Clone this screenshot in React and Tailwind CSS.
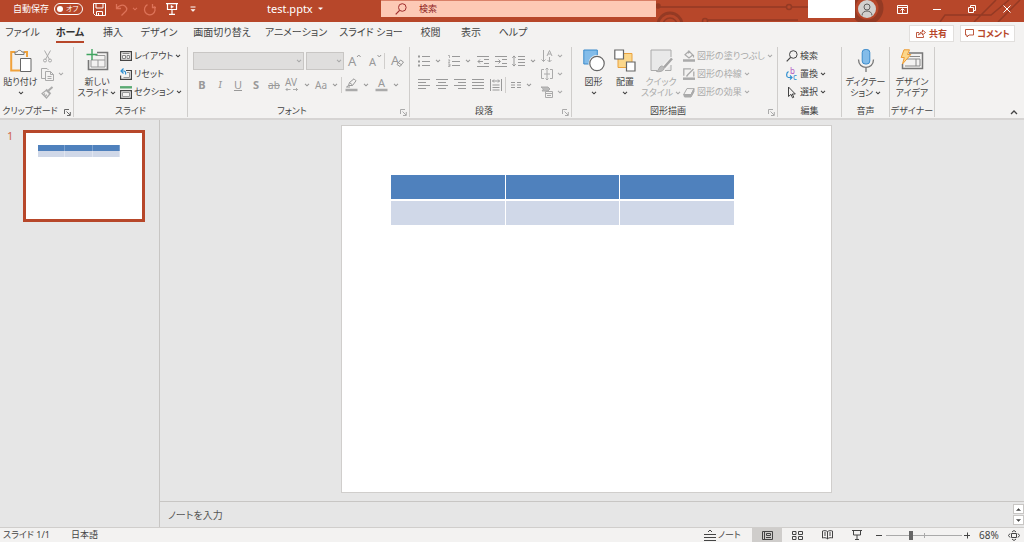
import React, { useState } from 'react'

const tabs = [
    { name: 'ファイル', width: 'w-[45px]' },
    { name: 'ホーム', width: 'w-[50px]' },
    { name: '挿入', width: 'w-[36px]' },
    { name: 'デザイン', width: 'w-[56px]' },
    { name: '画面切り替え', width: 'w-[70px]' },
    { name: 'アニメーション', width: 'w-[78px]' },
    { name: 'スライド ショー', width: 'w-[72px]' },
    { name: '校閲', width: 'w-[47px]' },
    { name: '表示', width: 'w-[34px]' },
    { name: 'ヘルプ', width: 'w-[50px]' },
]

// every drawing uses one viewBox unit per pixel
const Svg = ({ w, h, children, className = '' }) => (
    <svg width={w} height={h} viewBox={`0 0 ${w} ${h}`} fill="none" stroke="currentColor" className={`shrink-0 overflow-visible ${className}`} aria-hidden="true">
        {children}
    </svg>
)

const Caret = ({ className = '' }) => (
    <Svg w={6} h={4} className={className}><path d="M1 .8 3 2.8 5 .8" strokeWidth="1.100" /></Svg>
)

/* title bar */

const SaveIcon = () => (
    <Svg w={13} h={13}><path d="M.5.5h12v12H2.5l-2-2zM3 .5v4.500h7V.5M3.500 12.500v-4h6v4M5.500 10v2" /></Svg>
)

const UndoIcon = () => (
    <Svg w={13} h={13} className="text-[#dd7359]"><path d="M1.500 1v4.500H6M1.500 5.500C4 2 8 1.500 10 3c3 2.500 1.500 5 0 6l-3.500 3.500" strokeWidth="1.300" /></Svg>
)

const RedoIcon = () => (
    <Svg w={14} h={13} className="text-[#dd7359]"><path d="M9.500 1v3.500H13M4.500 1.700a5.300 5.300 0 1 0 6.500 1.600" strokeWidth="1.300" /></Svg>
)

const PresentIcon = () => (
    <Svg w={12} h={12}><path d="M0 .7h12M1.500 1v5.500h9V1M6 6.500v4.500M3 11.300h6" strokeWidth="1.200" /><path d="M5 2.300v3L7.500 3.800z" fill="currentColor" strokeWidth=".5" /></Svg>
)

const SearchIcon = () => (
    <Svg w={12} h={12}><circle cx="7.300" cy="4.500" r="3.800" /><path d="M4.600 7.300.7 11.300" strokeWidth="1.200" /></Svg>
)

/* ribbon */

const PasteIcon = () => (
    <Svg w={22} h={24}>
        <path d="M5 3H1.200v18.500H10M14 3h3v5" stroke="#f0a23c" strokeWidth="2" />
        <path d="M5 5.500V3h2.200C7.500.8 11.500.8 11.800 3H14v2.500z" fill="#f7f7f7" stroke="#777" />
        <path d="M10.500 9.500h10.500v13H10.500z" fill="#fff" stroke="#666" />
    </Svg>
)

const CutIcon = () => (
    <Svg w={9} h={13}><path d="m1.500.5 5 9M7.500.5l-5 9" /><circle cx="2" cy="10.500" r="1.500" /><circle cx="7" cy="10.500" r="1.500" /></Svg>
)

const CopyIcon = () => (
    <Svg w={13} h={13}><path d="M4 10.500H.5V.5h5.500l1.500 1.500M4.500 3.500h5l3 3v6h-8zM9.500 3.500v3h3M6.500 8.500h4M6.500 10.500h4" /></Svg>
)

const BrushIcon = () => (
    <Svg w={13} h={13}><path d="m11.500 1-4 3.500M5 3.500l4.500 4.500" strokeWidth="2" /><path d="M5 4.500 1 7.500 5.500 12l3.300-4M3 8.500l1-1M4.500 10l1.300-1.300" strokeWidth="1.200" /></Svg>
)

const NewSlideIcon = () => (
    <Svg w={23} h={24}>
        <path d="M11 3.500h10.500v17H2.500V11" stroke="#777" strokeWidth="1.600" />
        <path d="M9.500 6.500h9.500V18M5 11v7h14M5 11h14M12 11v7" stroke="#999" />
        <path d="M6 0v11M.5 5.500h11" stroke="#3fa45f" strokeWidth="1.400" />
    </Svg>
)

const LayoutIcon = () => (
    <Svg w={12} h={10}><path d="M.6.6h10.800v8.800H.6z" strokeWidth="1.200" /><path d="M2.500 2.500h7M2.500 4.500h3v3h-3zM7 4.500h2.500v3H7z" stroke="#888" /></Svg>
)

const ResetIcon = () => (
    <Svg w={12} h={12}>
        <path d="M6 2.500h5.400v8.900H.6V7.500" strokeWidth="1.200" /><path d="M7 4.500h2.500v5h-6" stroke="#999" />
        <path d="M3.500.5 1 3l2.500 2.500M1 3h2.500c2 0 2.500 1.500 2 3.500" stroke="#2f8fd0" strokeWidth="1.200" />
    </Svg>
)

const SectionIcon = () => (
    <Svg w={12} h={13}><path d="M0 1.300h12" stroke="#5aaa72" strokeWidth="2.400" /><path d="M.6 4.600h10.800v7.800H.6z" strokeWidth="1.200" /><path d="M2.500 6.500h7v4h-7z" stroke="#999" /></Svg>
)

const GrowIcon = () => (
    <Svg w={14} h={14}><text x="0" y="12" fontSize="13" fill="currentColor" stroke="none">A</text><path d="m9 3 1.800-2 1.800 2" /></Svg>
)

const ShrinkIcon = () => (
    <Svg w={13} h={14}><text x="0" y="12" fontSize="11" fill="currentColor" stroke="none">A</text><path d="m8.500 1 1.800 2 1.800-2" /></Svg>
)

const ClearIcon = () => (
    <Svg w={13} h={14}><text x="0" y="11" fontSize="13" fill="currentColor" stroke="none">A</text><path d="m6 10.500 3.500-4.500 3 2-3.500 4.500zM7.500 8.800l3 2" fill="#f3f2f1" /></Svg>
)

const SpacingIcon = () => (
    <Svg w={14} h={14}><text x="0" y="8" fontSize="10" fill="currentColor" stroke="none">AV</text><path d="M1 11.500h4.500M2.500 10 1 11.500 2.500 13M8 11.500h4.500M11 10l1.500 1.500L11 13" strokeWidth=".8" /></Svg>
)

const HighlightIcon = () => (
    <Svg w={13} h={14}><path d="M.5 12h12" stroke="#aaa" strokeWidth="2.500" /><path d="m3.500 7.500 1-3L9 .8l2 2-3.500 4.700zM4.500 4.500l3 2.500M3.500 7.500 1.500 9H5" /></Svg>
)

const FontColorIcon = () => (
    <Svg w={13} h={14}><text x="3" y="9" fontSize="11" fill="currentColor" stroke="none">A</text><path d="M.5 12h12" stroke="#aaa" strokeWidth="2.500" /></Svg>
)

const BulletIcon = () => (
    <Svg w={12} h={12}><path d="M0 1.500h2M0 6.500h2M0 10.500h2" strokeWidth="2" /><path d="M4 1.500h8M4 6.500h8M4 10.500h8" /></Svg>
)

const NumberIcon = () => (
    <Svg w={12} h={12}><path d="M0 .5h1.500V3M0 5h2L.5 7.500H2M0 9h2v2.500H0M.5 10.300H2" strokeWidth=".7" /><path d="M4 1.500h8M4 6.500h8M4 10.500h8" /></Svg>
)

const IndentIcon = ({ out }) => (
    <Svg w={12} h={11}><path d="M0 .5h12M7 3.500h5M7 7.500h5M0 10.500h12" /><path d={out ? 'M6 5.500H1M3 3.500l-2 2 2 2' : 'M0 5.500h5M3.500 3.500l2 2-2 2'} /></Svg>
)

const LineSpacingIcon = () => (
    <Svg w={13} h={12}><path d="M2 .8v10.400M.3 2.800 2 1l1.700 1.800M.3 9.200 2 11l1.700-1.800M6 1.500h7M6 4.500h7M6 7.500h7M6 10.500h7" /></Svg>
)

const alignPaths = {
    left: 'M0 .5h12M0 3.500h8M0 6.500h12M0 9.500h8',
    center: 'M0 .5h12M2 3.500h8M0 6.500h12M2 9.500h8',
    right: 'M0 .5h12M4 3.500h8M0 6.500h12M4 9.500h8',
    justify: 'M0 .5h12M0 3.500h12M0 6.500h12M0 9.500h12',
    distribute: 'M.5 0v12M11.500 0v12M2.500 2h7M4 .5 2.500 2 4 3.500M8 .5 9.500 2 8 3.500M2.500 6h7M2.500 8.500h7M2.500 11h7',
}

const AlignIcon = ({ type }) => (
    <Svg w={12} h={12}><path d={alignPaths[type]} /></Svg>
)

const ColumnsIcon = () => (
    <Svg w={10} h={6}><path d="M0 .5h4M6 .5h4M0 3h4M6 3h4M0 5.500h4M6 5.500h4" /></Svg>
)

const DirectionIcon = () => (
    <Svg w={12} h={13}><path d="M2.500 0v11.500M.5 9.500l2 2 2-2M8.500 7v5M6.500 10l2 2 2-2M6 6l2.500-5.500L11 6M7 4h3" /></Svg>
)

const AlignTextIcon = () => (
    <Svg w={12} h={12}><path d="M3 1.500H.5v9H3M9 1.500h2.500v9H9M6 0v12M4.500 1.500 6 0l1.500 1.500M4.500 10.500 6 12l1.500-1.500M3 6h6" /></Svg>
)

const SmartArtIcon = () => (
    <Svg w={12} h={12}><path d="M0 1h7l2 2-2 2H1l1.500-2z" fill="#bbb" /><path d="M4.500 5.500h7v6h-7zM4.500 7.500h7M6 9.500h4" /></Svg>
)

const ShapesIcon = () => (
    <Svg w={22} h={24}><path d="M.8 1h13.500v14H.8z" fill="#83bce9" stroke="#3b8bcb" /><circle cx="14" cy="14.500" r="8.500" fill="#f3f2f1" stroke="none" /><circle cx="14" cy="14.500" r="7.200" fill="#fff" stroke="#666" strokeWidth="1.200" /></Svg>
)

const ArrangeIcon = () => (
    <Svg w={22} h={24}><path d="M4 4.500h14v14H4z" fill="#fbd78b" stroke="#eaa23e" /><path d="M.8 1h8.700v9H.8zM12.500 13H21v9h-8.500z" fill="#fff" stroke="#666" strokeWidth="1.200" /></Svg>
)

const QuickStyleIcon = () => (
    <Svg w={23} h={24}><path d="M7 21.500H1V1h20v7M21 16v5.500h-6" fill="#e9e9e9" stroke="#aaa" /><path d="m22 9.500-8 9" stroke="#a5a5a5" strokeWidth="2.500" /><path d="M6.500 22.500c2.500-.5 2-5 5-5.500 2 0 3 1.500 2.500 3-1 2.500-4.500 3-7.500 2.500z" fill="#bbb" stroke="#aaa" /></Svg>
)

const FillIcon = () => (
    <Svg w={12} h={12}><path d="M0 10.500h12" stroke="#aaa" strokeWidth="2.500" /><path d="M2 4.800 6 1l3.800 4-3.800 3zM5.500 3.500v-3M10.500 5v2.500" strokeWidth="1.200" /></Svg>
)

const OutlineIcon = () => (
    <Svg w={12} h={12}><path d="M0 10.700h12" stroke="#aaa" strokeWidth="2.500" /><path d="M8 .8H.8v7M10.800 3.500v5M10.500 1 5 6.500 3.500 8.500" strokeWidth="1.300" /></Svg>
)

const EffectIcon = () => (
    <Svg w={12} h={11}><path d="m.7 7.500 3.300-6 7 .2-3 5.800z" fill="#f3f2f1" /><path d="M.7 7.500 8 7.700l3-6v3L8 10H1.500z" fill="#aaa" /></Svg>
)

const ReplaceIcon = () => (
    <Svg w={12} h={13}>
        <text x="4" y="6" fontSize="8" fill="#b259c2" stroke="none">b</text>
        <text x="7" y="12" fontSize="8" fill="#2f8fd0" stroke="none">c</text>
        <path d="M2.500 3.500C0 5 0 9 2.500 9.500h3.500M4 7.500l2 2-2 2" stroke="#2f8fd0" strokeWidth="1.200" />
    </Svg>
)

const CursorIcon = () => (
    <Svg w={12} h={13}><path d="M2.500 1v9.500L5 8.300l1.500 3.500 1.300-.6L6.300 8h3z" /></Svg>
)

const MicIcon = () => (
    <Svg w={18} h={24}><rect x="5.200" y=".5" width="7.600" height="14.500" rx="3" fill="#83bce9" stroke="#3b8bcb" /><path d="M1.500 10.500c0 10.500 15 10.500 15 0M9 18.500V23" stroke="#777" strokeWidth="1.300" /></Svg>
)

const IdeasIcon = () => (
    <Svg w={24} h={24}>
        <path d="M9 4h13.500v15.500H2.500V15" stroke="#777" strokeWidth="1.500" /><path d="M9.500 7.500H20M5 10h15v7H5M16 10v7" stroke="#888" />
        <path d="M4 .8h5.500L7.500 5.500h3.300L2.500 15l1.800-6.500H1.200z" fill="#fcd68a" stroke="#ed9b33" />
    </Svg>
)

const Group = ({ label, width, launcher, dim, children }) => (
    <section aria-label={label} className={`${width} flex shrink-0 flex-col border-r border-[#cfcdcb]`}>
        <div className="flex h-[57px]">{children}</div>
        <div className={`relative flex h-[13px] items-center justify-center whitespace-nowrap text-[#444] ${launcher ? 'pr-[13px]' : ''}`}>
            {label}
            {launcher && (
                <button aria-label={`${label}の設定`} className={`absolute right-[2px] bottom-[1px] ${dim ? 'text-[#aaa]' : 'text-[#666]'}`}>
                    <Svg w={7} h={7}><path d="M.5 5V.5H5M2.500 2.500l3.500 3.500M6.300 3v3.500H3" /></Svg>
                </button>
            )}
        </div>
    </section>
)

const BigButton = ({ icon, top, bottom, caret, width, dim }) => (
    <button className={`${width} flex shrink-0 flex-col items-center whitespace-nowrap pt-[2px] leading-[11px] ${dim ? 'text-[#aaa]' : 'text-[#444]'}`}>
        {icon}
        <span className="mt-[3px]">{top}</span>
        <span className="flex h-[11px] items-center gap-[2px]">{bottom}{caret && <Caret />}</span>
    </button>
)

const SmallButton = ({ icon, label, caret, name, dim }) => (
    <button aria-label={name} className={`flex h-[18px] items-center gap-[2px] whitespace-nowrap ${dim ? 'text-[#aaa]' : 'text-[#444]'}`}>
        {icon}
        {label}
        {caret && <Caret className={label ? '' : 'ml-[2px]'} />}
    </button>
)

const Tool = ({ name, width = 'w-[18px]', caret, children }) => (
    <button aria-label={name} className={`${width} flex h-[24px] items-center justify-center gap-[5px]`}>
        {children}
        {caret && <Caret />}
    </button>
)

const Divider = () => <div className="my-[4px] w-px bg-[#d0cecc]" />

const TitleBar = () => {
    const [autoSave, setAutoSave] = useState(false)

    return (
        <header className="flex h-[22px] shrink-0 items-start bg-[#b7472a] text-white">
            <div className="flex h-[18px] w-[267px] shrink-0 items-center pl-[13px]">
                <label className="flex w-[80px] items-center gap-[5px] whitespace-nowrap">
                    自動保存
                    <input type="checkbox" className="sr-only" checked={autoSave} onChange={() => setAutoSave(!autoSave)} />
                    <span className="flex h-[12px] w-[29px] shrink-0 items-center gap-[3px] rounded-full border border-white pl-[2px] text-[7px] leading-[10px]">
                        <span className="size-[6px] rounded-full bg-white" />オフ
                    </span>
                </label>
                <button aria-label="上書き保存" className="w-[22px]"><SaveIcon /></button>
                <button aria-label="元に戻す" className="flex w-[28px] items-center gap-[4px]"><UndoIcon /><Caret className="text-[#dd7359]" /></button>
                <button aria-label="やり直し" className="w-[23px]"><RedoIcon /></button>
                <button aria-label="スライド ショーの開始" className="w-[24px]"><PresentIcon /></button>
                <button aria-label="クイック アクセスの設定">
                    <Svg w={6} h={7}><path d="M.5 1h5" /><path d="M1 3.500h4L3 5.500z" fill="currentColor" strokeWidth=".5" /></Svg>
                </button>
            </div>
            <button className="flex h-[17px] w-[114px] shrink-0 items-center gap-[5px] text-[11px]">
                test.pptx
                <Svg w={5} h={4}><path d="M.5.8h4l-2 2z" fill="currentColor" strokeWidth=".5" /></Svg>
            </button>
            <label className="flex h-[17px] min-w-0 flex-1 items-center gap-[12px] border-t border-[#d98068] bg-[#fdc9b5] pl-[14px] text-[#a02d2d]">
                <SearchIcon />
                <input aria-label="検索" placeholder="検索" className="min-w-0 flex-1 outline-none placeholder:text-[#8e2424]" />
            </label>
            <div className="relative flex h-[22px] w-[368px] shrink-0 items-start overflow-hidden">
                <svg width="368" height="22" viewBox="0 0 368 22" fill="none" stroke="#943a24" strokeWidth="1.500" className="absolute inset-0" aria-hidden="true">
                    <path d="M2 7h128M136 7h30M52 20h90M284 22l5-7h46l18-15M318 22l22-22M342 22l22-22" />
                    <circle cx="2" cy="6" r="2" fill="#943a24" />
                    <circle cx="133" cy="7" r="2.500" />
                    <circle cx="14" cy="25" r="12" strokeWidth="3" /><circle cx="14" cy="25" r="7" />
                    <circle cx="49" cy="21" r="2.500" />
                    <circle cx="211" cy="8" r="14" strokeWidth="5" />
                </svg>
                <div className="relative ml-auto flex h-[18px] items-center">
                    <div className="h-full w-[47px] bg-white" />
                    <button aria-label="アカウント" className="ml-[3px] grid size-[18px] place-items-center rounded-full bg-[#d2d0ce] text-[#605e5c]">
                        <Svg w={12} h={13}><circle cx="6" cy="4" r="3" /><path d="M1 12.500c0-6 10-6 10 0" /></Svg>
                    </button>
                    <button aria-label="リボンの表示オプション" className="ml-[9px] grid w-[34px] place-items-center">
                        <Svg w={11} h={9}><path d="M.5.5h10v8H.5zM.5 2.500h10M5.500 8V4M3.500 5.500l2-2 2 2" /></Svg>
                    </button>
                    <button aria-label="最小化" className="grid w-[36px] place-items-center"><Svg w={8} h={8}><path d="M0 4.500h8" /></Svg></button>
                    <button aria-label="元に戻す (縮小)" className="grid w-[34px] place-items-center">
                        <Svg w={8} h={8}><path d="M.5 2.500h5v5h-5zM2.500 2V.5h5v5H6" /></Svg>
                    </button>
                    <button aria-label="閉じる" className="grid w-[35px] place-items-center"><Svg w={8} h={8}><path d="m.5.5 7 7M7.500.5l-7 7" /></Svg></button>
                </div>
            </div>
        </header>
    )
}

const TabBar = ({ active, setActive }) => (
    <nav className="flex h-[25px] items-start">
        {tabs.map((tab) => (
            <button key={tab.name} onClick={() => setActive(tab.name)} className={`${tab.width} flex h-[21px] shrink-0 justify-center whitespace-nowrap text-[10px] ${active === tab.name ? 'font-bold text-[#333]' : ''}`}>
                <span className={`flex h-full items-center border-b-2 ${active === tab.name ? 'border-[#b7472a]' : 'border-transparent'}`}>{tab.name}</span>
            </button>
        ))}
        <div className="ml-auto flex gap-[6px] pt-[3px] pr-[9px] font-bold text-[#b7472a]">
            <button className="flex h-[17px] w-[45px] items-center justify-center gap-[3px] border border-[#e1dfdd] bg-white">
                <Svg w={10} h={9}><path d="M3 3.500H.5v5h7v-2M2.500 6c.5-2 2-3 4-3V1l3 2.500-3 2.500V4.500c-2 0-3 .5-4 1.500z" strokeWidth=".9" /></Svg>
                共有
            </button>
            <button className="flex h-[17px] w-[55px] items-center justify-center gap-[3px] border border-[#e1dfdd] bg-white">
                <Svg w={9} h={9}><path d="M.5.5h8v5.500H4L2 8V6H.5z" strokeWidth=".9" /></Svg>
                コメント
            </button>
        </div>
    </nav>
)

const FontSelect = ({ name, width }) => (
    <div className={`relative ${width}`}>
        <select aria-label={name} disabled className="block h-[18px] w-full appearance-none border border-[#c8c6c4] bg-[#dfdedd]" />
        <Caret className="absolute right-[2px] top-[7px] text-[#aaa]" />
    </div>
)

const Ribbon = () => (
    <div className="flex h-[71px] pb-px">
        <Group label="クリップボード" width="w-[74px]" launcher>
            <BigButton icon={<PasteIcon />} top="貼り付け" caret width="w-[41px]" />
            <div className="flex flex-col">
                <SmallButton icon={<span className="w-[13px] pl-[2px]"><CutIcon /></span>} name="切り取り" dim />
                <SmallButton icon={<CopyIcon />} name="コピー" caret dim />
                <SmallButton icon={<BrushIcon />} name="書式のコピー" dim />
            </div>
        </Group>
        <Group label="スライド" width="w-[114px]">
            <BigButton icon={<NewSlideIcon />} top="新しい" bottom="スライド" caret width="w-[46px]" />
            <div className="flex flex-col">
                <SmallButton icon={<LayoutIcon />} label="レイアウト" caret />
                <SmallButton icon={<ResetIcon />} label="リセット" />
                <SmallButton icon={<SectionIcon />} label="セクション" caret />
            </div>
        </Group>
        <Group label="フォント" width="w-[222px]" launcher dim>
            <div className="flex flex-col pt-[2px] pl-[5px] text-[#999]">
                <div className="flex h-[24px] items-center">
                    <div className="flex gap-[2px]">
                        <FontSelect name="フォント名" width="w-[111px]" />
                        <FontSelect name="フォント サイズ" width="w-[38px]" />
                    </div>
                    <Tool name="拡大" width="w-[22px]"><GrowIcon /></Tool>
                    <Tool name="縮小"><ShrinkIcon /></Tool>
                    <div className="h-[16px] w-px bg-[#d0cecc]" />
                    <Tool name="書式のクリア" width="w-[24px]"><ClearIcon /></Tool>
                </div>
                <div className="flex text-[11px]">
                    <Tool name="太字"><b>B</b></Tool>
                    <Tool name="斜体"><i className="font-serif">I</i></Tool>
                    <Tool name="下線"><u>U</u></Tool>
                    <Tool name="影"><b>S</b></Tool>
                    <Tool name="取り消し線"><s className="text-[10px]">ab</s></Tool>
                    <Tool name="文字の間隔" width="w-[29px]" caret><SpacingIcon /></Tool>
                    <Tool name="大文字/小文字" width="w-[29px]" caret><span className="text-[10px]">Aa</span></Tool>
                    <Divider />
                    <Tool name="蛍光ペン" width="w-[30px]" caret><HighlightIcon /></Tool>
                    <Tool name="フォントの色" width="w-[29px]" caret><FontColorIcon /></Tool>
                </div>
            </div>
        </Group>
        <Group label="段落" width="w-[162px]" launcher dim>
            <div className="flex w-[128px] flex-col pt-[2px] pl-[5px] text-[#999]">
                <div className="flex">
                    <Tool name="箇条書き" width="w-[29px]" caret><BulletIcon /></Tool>
                    <Tool name="段落番号" width="w-[30px]" caret><NumberIcon /></Tool>
                    <Tool name="インデントを減らす"><IndentIcon out /></Tool>
                    <Tool name="インデントを増やす"><IndentIcon /></Tool>
                    <Tool name="行間" width="w-[28px]" caret><LineSpacingIcon /></Tool>
                </div>
                <div className="flex">
                    <Tool name="左揃え"><AlignIcon type="left" /></Tool>
                    <Tool name="中央揃え"><AlignIcon type="center" /></Tool>
                    <Tool name="右揃え"><AlignIcon type="right" /></Tool>
                    <Tool name="両端揃え"><AlignIcon type="justify" /></Tool>
                    <Tool name="均等割り付け"><AlignIcon type="distribute" /></Tool>
                    <Divider />
                    <Tool name="段組み" width="w-[30px]" caret><ColumnsIcon /></Tool>
                </div>
            </div>
            <div className="flex flex-col pl-[3px]">
                <SmallButton icon={<DirectionIcon />} name="文字列の方向" caret dim />
                <SmallButton icon={<AlignTextIcon />} name="文字の配置" caret dim />
                <SmallButton icon={<SmartArtIcon />} name="SmartArt に変換" caret dim />
            </div>
        </Group>
        <Group label="図形描画" width="w-[206px]" launcher dim>
            <div className="flex w-[111px] shrink-0 pl-[6px]">
                <BigButton icon={<ShapesIcon />} top="図形" caret width="w-[31px]" />
                <BigButton icon={<ArrangeIcon />} top="配置" caret width="w-[32px]" />
                <BigButton icon={<QuickStyleIcon />} top="クイック" bottom="スタイル" caret width="w-[40px]" dim />
            </div>
            <div className="flex flex-col">
                <SmallButton icon={<FillIcon />} label="図形の塗りつぶし" caret dim />
                <SmallButton icon={<OutlineIcon />} label="図形の枠線" caret dim />
                <SmallButton icon={<EffectIcon />} label="図形の効果" caret dim />
            </div>
        </Group>
        <Group label="編集" width="w-[64px]">
            <div className="flex flex-col pl-[8px]">
                <SmallButton icon={<SearchIcon />} label="検索" />
                <SmallButton icon={<ReplaceIcon />} label="置換" caret />
                <SmallButton icon={<CursorIcon />} label="選択" caret />
            </div>
        </Group>
        <Group label="音声" width="w-[48px]">
            <BigButton icon={<MicIcon />} top="ディクテー" bottom="ション" caret width="w-[47px]" />
        </Group>
        <Group label="デザイナー" width="w-[45px]">
            <BigButton icon={<IdeasIcon />} top="デザイン" bottom="アイデア" width="w-[44px]" />
        </Group>
        <button aria-label="リボンを折りたたむ" className="mt-auto mr-[6px] mb-[2px] ml-auto"><Svg w={8} h={6}><path d="M1 5 4 2l3 3" strokeWidth="1.300" /></Svg></button>
    </div>
)

const SlideTable = () => (
    <table className="w-[88%] table-fixed border-separate border-spacing-0">
        <tbody>
            <tr>{[0, 1, 2].map((c) => <td key={c} className="h-[25px] border-r border-b border-white bg-[#4f81bd] p-0" />)}</tr>
            <tr>{[0, 1, 2].map((c) => <td key={c} className="h-[25px] border-t border-r border-white bg-[#d0d8e8] p-0" />)}</tr>
        </tbody>
    </table>
)

const Workspace = () => (
    <main className="flex min-h-0 flex-1 border-t-2 border-[#d6d4d3]">
        <aside className="flex w-[160px] shrink-0 items-start border-r border-[#c8c6c4] pt-[10px] pl-[7px]">
            <span className="w-[16px] text-[11px] leading-[12px] text-[#d0654c]">1</span>
            <button aria-label="スライド 1" className="flex aspect-[4/3] w-[122px] items-start border-[3px] border-[#b7472a] bg-white pt-[12px] pl-[12px]">
                <span className="grid w-[82px] grid-cols-3">
                    {[0, 1, 2].map((c) => <span key={c} className="h-[6px] border-r border-[#7ba1cf] bg-[#4f81bd]" />)}
                    {[0, 1, 2].map((c) => <span key={c} className="h-[6px] border-r border-[#e0e5f0] bg-[#d0d8e8]" />)}
                </span>
            </button>
        </aside>
        <div className="flex min-w-0 flex-1 flex-col">
            <div className="flex min-h-0 flex-1 justify-center pt-[5px] pr-[11px] pb-[8px]">
                <div className="aspect-[4/3] h-full border border-[#d0cecc] bg-white pt-[49px] pl-[49px] pr-[49px]">
                    <SlideTable />
                </div>
            </div>
            <div className="flex h-[26px] shrink-0 items-center border-t border-[#c8c6c4] pl-[8px]">
                <input aria-label="ノート" placeholder="ノートを入力" className="min-w-0 flex-1 text-[10px] outline-none placeholder:text-[#555]" />
                <div className="flex flex-col gap-px">
                    <button aria-label="上へ" className="grid h-[10px] w-[11px] place-items-center border border-[#c8c6c4] bg-white"><Svg w={5} h={3}><path d="M.5 2.500 2.500.5l2 2z" fill="currentColor" strokeWidth=".5" /></Svg></button>
                    <button aria-label="下へ" className="grid h-[10px] w-[11px] place-items-center border border-[#c8c6c4] bg-white"><Svg w={5} h={3}><path d="M.5.5 2.500 2.500l2-2z" fill="currentColor" strokeWidth=".5" /></Svg></button>
                </div>
            </div>
        </div>
    </main>
)

const StatusBar = () => {
    const [zoom, setZoom] = useState(68)

    return (
        <footer className="flex h-[15px] shrink-0 items-center border-t border-[#d0cecc] bg-[#f3f2f1]">
            <span className="w-[71px] whitespace-nowrap pl-[3px]">スライド 1/1</span>
            <span>日本語</span>
            <div className="ml-auto flex h-full items-center">
                <button className="flex w-[48px] items-center gap-[2px] whitespace-nowrap">
                    <Svg w={12} h={12}><path d="M0 5.500h12M0 8.500h12M0 11.500h12M4 3l2-2 2 2" /></Svg>ノート
                </button>
                <button aria-label="標準" className="grid h-full w-[30px] place-items-center bg-[#cfcdcb]">
                    <Svg w={11} h={9}><path d="M.5.5h10v8H.5zM2.500.5v8M4.500 2.500h4v2h-4zM4 6.500h5" /></Svg>
                </button>
                <button aria-label="スライド一覧" className="grid h-full w-[30px] place-items-center">
                    <Svg w={11} h={9}><path d="M.5.5h3.500v3H.5zM6.500.5h4v3h-4zM.5 5.500h3.500v3H.5zM6.500 5.500h4v3h-4z" /></Svg>
                </button>
                <button aria-label="閲覧表示" className="grid h-full w-[30px] place-items-center">
                    <Svg w={11} h={10}><path d="M5.500 1.500C4 .5 2 .5.5 1v7c1.500-.5 3.500-.5 5 .8C7 7.500 9 7.500 10.500 8V1C9 .5 7 .5 5.500 1.500v7.500M2 3h2M2 5h2M7 3h2M7 5h2" /></Svg>
                </button>
                <button aria-label="スライド ショー" className="grid h-full w-[29px] place-items-center">
                    <Svg w={10} h={10}><path d="M0 .5h10M1.500.5v4.500h7V.5M5 5v4M3 9.500h4" /></Svg>
                </button>
                <button aria-label="縮小" onClick={() => setZoom(zoom - 1)} className="grid w-[15px] place-items-center"><Svg w={6} h={6}><path d="M0 3.500h6" /></Svg></button>
                <input aria-label="ズーム" type="range" min="10" max="190" value={zoom} onChange={(e) => setZoom(Number(e.target.value))}
                    className="h-[9px] w-[76px] appearance-none bg-[linear-gradient(#aaa,#aaa),linear-gradient(#aaa,#aaa)] bg-[length:100%_1px,1px_5px] bg-center bg-no-repeat [&::-webkit-slider-thumb]:h-[9px] [&::-webkit-slider-thumb]:w-[4px] [&::-webkit-slider-thumb]:appearance-none [&::-webkit-slider-thumb]:bg-[#666]" />
                <button aria-label="拡大" onClick={() => setZoom(zoom + 1)} className="grid w-[10px] place-items-center"><Svg w={6} h={6}><path d="M0 3.500h6M3.500.5v6" /></Svg></button>
                <span className="w-[36px] pl-[7px] text-[10px]">{zoom}%</span>
                <button aria-label="ウィンドウに合わせる" className="w-[16px]">
                    <Svg w={12} h={11}><path d="M3.500 3.500h5v4h-5zM4 2l2-1.500L8 2M4 9l2 1.500L8 9M2 3.500.5 5.500 2 7.500M10 3.500l1.500 2-1.500 2" /></Svg>
                </button>
            </div>
        </footer>
    )
}

const App = () => {
    const [active, setActive] = useState('ホーム')

    return (
        <div className="flex h-screen flex-col overflow-hidden bg-[#e6e6e6] font-['Noto_Sans','Noto_Sans_CJK_JP',sans-serif] text-[9px] leading-[12px] text-[#444] [font-feature-settings:'palt']">
            <TitleBar />
            <div className="shrink-0 bg-[#f3f2f1]">
                <TabBar active={active} setActive={setActive} />
                <Ribbon />
            </div>
            <Workspace />
            <StatusBar />
        </div>
    )
}

export default App
